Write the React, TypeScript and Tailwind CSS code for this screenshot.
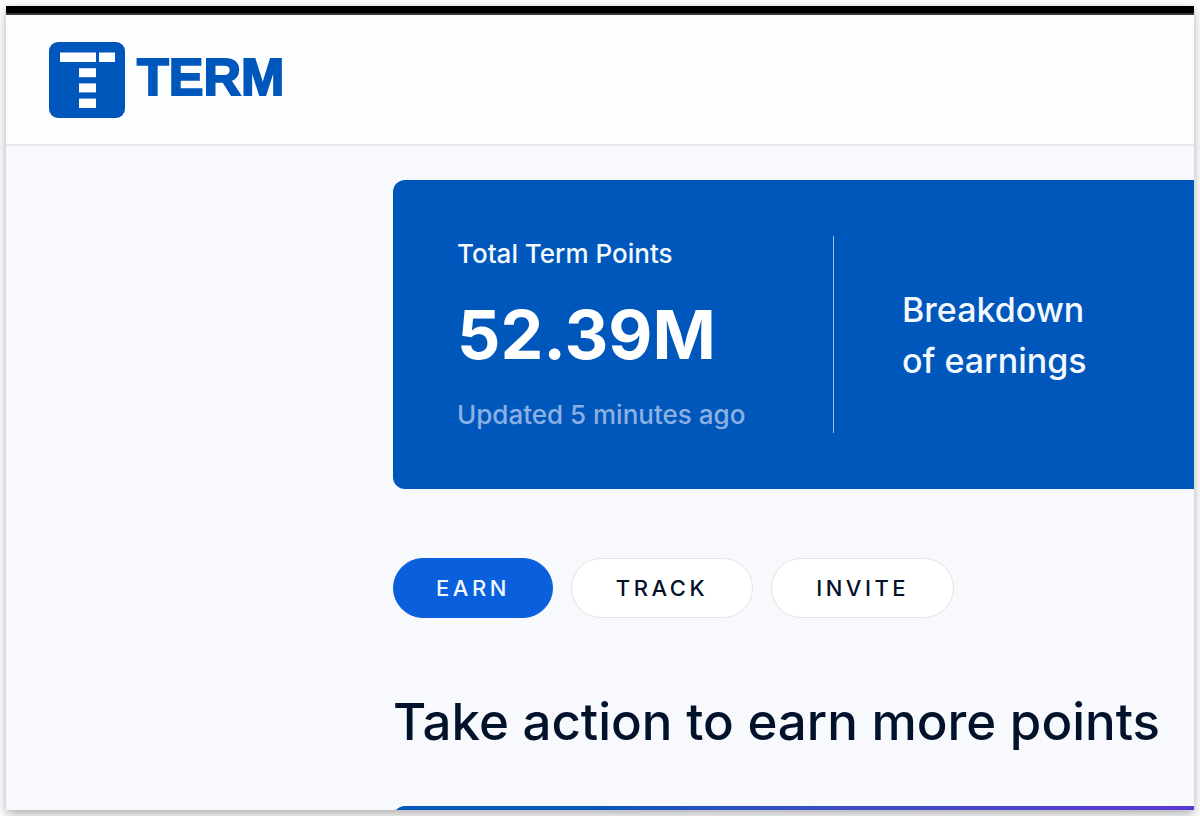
import React, { useState } from "react";

const tabs = ["EARN", "TRACK", "INVITE"];

/**
 * Brand mark: rounded square with a "T" assembled from blocks.
 */
const LogoMark: React.FC = () => (
  <svg viewBox="0 0 76 76" className="h-[76px] w-[76px] shrink-0" aria-hidden="true">
    <rect width="76" height="76" rx="9" fill="#0057bb" />
    <g fill="#fdfeff">
      <rect x="11" y="10.5" width="36" height="9.5" />
      <rect x="50" y="10.5" width="16" height="9.5" />
      <rect x="30" y="26.2" width="17" height="9" />
      <rect x="30" y="41.4" width="17" height="9" />
      <rect x="30" y="56.6" width="17" height="9.4" />
    </g>
  </svg>
);

const Header: React.FC = () => (
  <header className="flex items-center border-b-2 border-[#e9ebef] bg-[#fcfdff] px-[43px] pt-[27px] pb-[26px]">
    <a href="#home" className="flex items-center gap-3" aria-label="TERM">
      <LogoMark />
      <span className="pb-1.5 font-['Liberation_Sans',sans-serif] text-[52px] leading-[68px] font-bold text-[#0057bb] [-webkit-text-stroke:2px_#0057bb]">
        TERM
      </span>
    </a>
  </header>
);

const PointsCard: React.FC = () => (
  <section className="flex items-stretch rounded-l-xl bg-[#0057bb] py-14 pl-16 text-[#f4f9ff]">
    <div className="w-[377px] shrink-0 border-r border-[#9dc0e8] text-[26px] leading-9 font-medium">
      <p>Total Term Points</p>
      <p className="my-4 text-[68px] leading-[93px] font-bold text-white">52.39M</p>
      <p className="text-[#8db0e3]">Updated 5 minutes ago</p>
    </div>
    <h2 className="self-center pl-[68px] text-[34px] leading-[51px] font-medium">
      Breakdown
      <br />
      of earnings
    </h2>
  </section>
);

const App: React.FC = () => {
  const [active, setActive] = useState("EARN");

  return (
    <div className="flex h-screen flex-col overflow-hidden bg-white p-1.5 font-['Inter',sans-serif]">
      <div className="flex min-h-0 flex-1 flex-col overflow-hidden bg-[#f8f9fd] shadow-[0_4px_10px_rgba(0,0,0,0.32)]">
        <div className="h-[9px] shrink-0 border-b-2 border-[#3c3838] bg-black" />
        <Header />
        <main className="pt-[34px] pl-[387px]">
          <PointsCard />

          <nav className="mt-[69px] flex gap-[18px]">
            {tabs.map((tab) => (
              <button
                key={tab}
                type="button"
                onClick={() => setActive(tab)}
                className={`h-[60px] rounded-full border text-[22px] font-medium tracking-[0.16em] ${
                  tab === active
                    ? "border-[#0a5fdc] bg-[#0a5fdc] px-[42px] text-[#f1f7ff]"
                    : "border-[#e2e4e8] bg-white px-11 text-[#04112b]"
                }`}
              >
                {tab}
              </button>
            ))}
          </nav>

          <h1 className="mt-[70px] text-[51px] leading-[68px] font-medium whitespace-nowrap text-[#02122b]">
            Take action to earn more points
          </h1>

          {/* Top edge of the next card */}
          <section className="mt-[50px] h-72 rounded-l-xl bg-linear-to-r from-[#0057bb] from-25% to-[#5b37d3]" />
        </main>
      </div>
    </div>
  );
};

export default App;
